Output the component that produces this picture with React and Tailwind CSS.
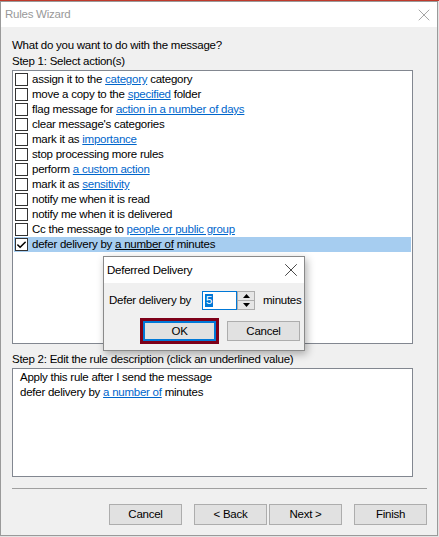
import { Check, X } from "lucide-react";

const actions = [
  ["assign it to the ", "category", " category"],
  ["move a copy to the ", "specified", " folder"],
  ["flag message for ", "action in a number of days", ""],
  ["clear message's categories", "", ""],
  ["mark it as ", "importance", ""],
  ["stop processing more rules", "", ""],
  ["perform ", "a custom action", ""],
  ["mark it as ", "sensitivity", ""],
  ["notify me when it is read", "", ""],
  ["notify me when it is delivered", "", ""],
  ["Cc the message to ", "people or public group", ""],
  ["defer delivery by ", "a number of", " minutes"],
];

const font = { fontFamily: '"Liberation Sans", Arial, sans-serif' };

function WinButton({ children, className = "" }) {
  return (
    <button
      className={`flex h-[21px] w-[73px] items-center justify-center border border-[#adadad] bg-[#e1e1e1] text-[#000] ${className}`}
    >
      {children}
    </button>
  );
}

function ActionRow({ parts, selected }) {
  const [before, link, after] = parts;
  return (
    <div className={`flex h-[15px] items-center ${selected ? "bg-[#a6cdf0]" : ""}`}>
      <span className="ml-[1px] flex h-[13px] w-[13px] items-center justify-center border border-[#333] bg-white">
        {selected ? <Check size={12} strokeWidth={3.5} className="text-black" /> : null}
      </span>
      <span className="ml-[4px] whitespace-pre">
        {before}
        {link ? (
          <span className={`underline ${selected ? "text-black" : "text-[#0066cc]"}`}>{link}</span>
        ) : null}
        {after}
      </span>
    </div>
  );
}

function Arrow({ up }) {
  return (
    <svg width="7" height="4" viewBox="0 0 7 4">
      <polygon points={up ? "0,4 7,4 3.5,0" : "0,0 7,0 3.5,4"} fill="#000" />
    </svg>
  );
}

function DeferDialog() {
  return (
    <div className="absolute left-[103px] top-[255px] flex h-[95px] w-[202px] flex-col border border-[#8a8a8a] bg-[#f0f0f0] shadow-[2px_3px_8px_rgba(0,0,0,0.3)]">
      <div className="flex h-[26px] items-center justify-between bg-white pl-[3px] pr-[2px]">
        <span>Deferred Delivery</span>
        <X size={22} strokeWidth={0.9} className="text-[#222]" />
      </div>
      <div className="mt-[8px] flex h-[19px] items-center">
        <span className="ml-[5px] w-[93px]">Defer delivery by</span>
        <div className="flex h-[19px] w-[35px] items-center border border-[#0078d7] bg-white pl-[2px]">
          <span className="bg-[#0078d7] px-[1px] leading-[13px] text-white">5</span>
        </div>
        <div className="flex h-[19px] w-[18px] flex-col border border-[#adadad] bg-[#f0f0f0]">
          <div className="flex flex-1 items-center justify-center border-b border-[#adadad] bg-[#e6e6e6]">
            <Arrow up />
          </div>
          <div className="flex flex-1 items-center justify-center bg-[#e6e6e6]">
            <Arrow />
          </div>
        </div>
        <span className="ml-[8px]">minutes</span>
      </div>
      <div className="mt-[8px] flex items-center">
        <div className="ml-[36px] border-[3px] border-[#7d0019]">
          <button className="flex h-[20px] w-[73px] items-center justify-center border-2 border-[#0078d7] bg-[#e1e1e1]">
            OK
          </button>
        </div>
        <button className="ml-[8px] flex h-[20px] w-[73px] items-center justify-center border border-[#adadad] bg-[#e1e1e1]">
          Cancel
        </button>
      </div>
    </div>
  );
}

export default function App() {
  return (
    <div
      className="relative h-[537px] w-[439px] overflow-hidden border-t border-[#c0392b] bg-[#e4e4e4] text-[11.5px] leading-[15px] tracking-[-0.25px] text-black"
      style={font}
    >
      <div className="flex h-[535px] w-[438px] flex-col border border-[#9a9a9a] bg-[#f0f0f0]">
        <div className="flex h-[25px] items-center justify-between bg-white pl-[4px] pr-[3px]">
          <span className="text-[#999]">Rules Wizard</span>
          <X size={20} strokeWidth={0.9} className="text-[#888]" />
        </div>

        <div className="flex flex-col pl-[11px] pt-[11px]">
          <div>What do you want to do with the message?</div>
          <div className="mt-[1px]">Step 1: Select action(s)</div>

          <div className="mt-[1px] h-[274px] w-[401px] border border-[#828790] bg-white px-[1px] pt-[1px]">
            {actions.map((parts, i) => (
              <ActionRow key={i} parts={parts} selected={i === actions.length - 1} />
            ))}
          </div>

          <div className="mt-[8px]">Step 2: Edit the rule description (click an underlined value)</div>
          <div className="mt-[1px] h-[109px] w-[401px] border border-[#828790] bg-white pl-[7px] pt-[1px]">
            <div>Apply this rule after I send the message</div>
            <div>
              defer delivery by <span className="text-[#0066cc] underline">a number of</span> minutes
            </div>
          </div>

          <div className="mt-[11px] h-[1px] w-[415px] bg-[#a0a0a0]" />

          <div className="mt-[15px] flex w-[415px] justify-end">
            <WinButton>Cancel</WinButton>
            <WinButton className="ml-[12px]">&lt; Back</WinButton>
            <WinButton className="ml-[2px]">Next &gt;</WinButton>
            <WinButton className="ml-[12px]">Finish</WinButton>
          </div>
        </div>
      </div>

      <DeferDialog />
    </div>
  );
}
